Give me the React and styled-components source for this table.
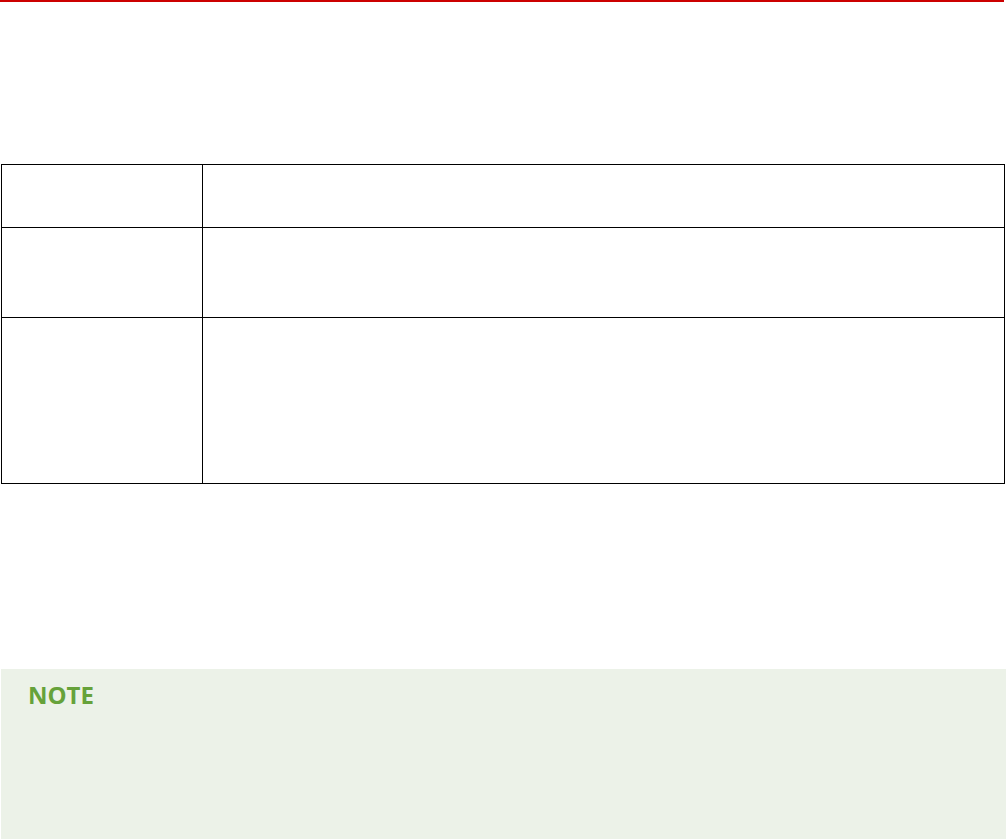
import React from 'react';
import styled, { createGlobalStyle } from 'styled-components';

const GlobalStyle = createGlobalStyle`
  body {
    margin: 0;
    background: #ffffff;
    font-family: "Open Sans", "Liberation Sans", sans-serif;
  }
`;

const Page = styled.div`
  width: 1006px;
  height: 839px;
  overflow: hidden;
`;

const TopRule = styled.div`
  width: 1004px;
  height: 2px;
  background: #cc0000;
`;

const Table = styled.table`
  border-collapse: collapse;
  margin: 162px 0 0 1px;
  width: 1004px;
  table-layout: fixed;

  td {
    border: 1px solid #000000;
    padding: 0;
  }
`;

const Row = styled.tr`
  height: ${(p) => p.h}px;
`;

const LabelCell = styled.td`
  width: 200px;
`;

const Note = styled.div`
  margin: 185px 0 0 1px;
  height: 170px;
  background: #ecf2e8;
  padding: 11px 0 0 27px;
  box-sizing: border-box;
`;

const NoteTitle = styled.div`
  color: #66a23a;
  font-weight: 700;
  font-size: 24px;
  line-height: 30px;
`;

const App = () => (
  <Page>
    <GlobalStyle />
    <TopRule />
    <Table>
      <tbody>
        <Row h={63}>
          <LabelCell />
          <td />
        </Row>
        <Row h={90}>
          <LabelCell />
          <td />
        </Row>
        <Row h={166}>
          <LabelCell />
          <td />
        </Row>
      </tbody>
    </Table>
    <Note>
      <NoteTitle>NOTE</NoteTitle>
    </Note>
  </Page>
);

export default App;
